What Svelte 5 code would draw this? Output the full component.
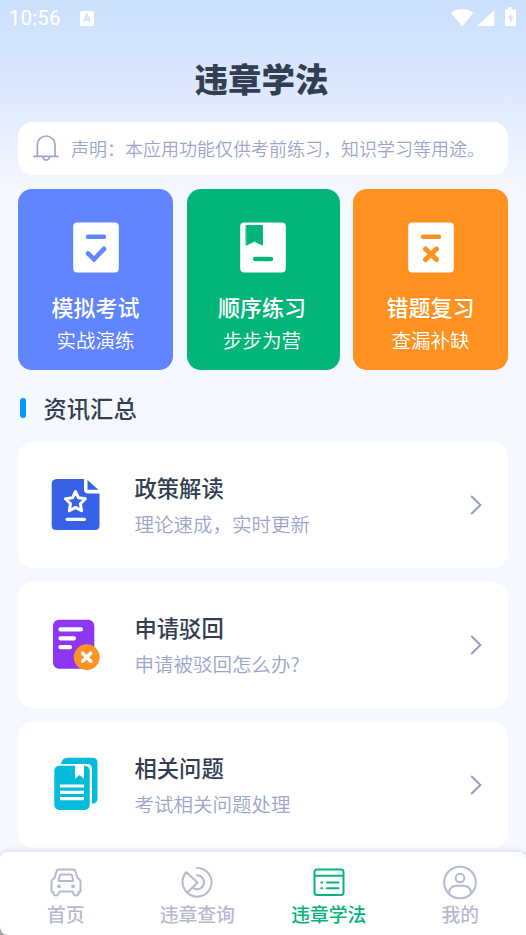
<script>
    const cards = [
        { id: 'exam', title: '模拟考试', text: '实战演练' },
        { id: 'order', title: '顺序练习', text: '步步为营' },
        { id: 'wrong', title: '错题复习', text: '查漏补缺' }
    ];

    const articles = [
        { id: 'policy', title: '政策解读', text: '理论速成，实时更新' },
        { id: 'reject', title: '申请驳回', text: '申请被驳回怎么办?' },
        { id: 'related', title: '相关问题', text: '考试相关问题处理' }
    ];

    const tabs = [
        { id: 'home', label: '首页' },
        { id: 'query', label: '违章查询' },
        { id: 'learn', label: '违章学法' },
        { id: 'mine', label: '我的' }
    ];

    let active = 'learn';
</script>

<div class="screen">
    <header class="status">
        <span class="time">10:56</span>
        <svg class="badge" width="14" height="15" viewBox="0 0 14 15">
            <rect width="14" height="15" rx="1.5" fill="#fff" />
            <path d="M4 10.5 7 3.5l3 7M5.2 8.4h3.6" fill="none" stroke="#cfe1fc" stroke-width="1.7" />
            <path d="M7.5 13.2h1M9.7 13.2h1M11.8 13.2h1" stroke="#cfe1fc" stroke-width="1" />
        </svg>
        <svg class="signals" width="66" height="20" viewBox="0 0 66 20">
            <g fill="#fff">
                <path d="M0 4.8C6.5-.2 15.8-.2 22.4 4.8L11.2 18.2z" />
                <path d="M43.3 2v16H26z" />
                <path d="M57-.7h4v1.900h2.700q1.300 0 1.300 1.300v14.200q0 1.300-1.300 1.300h-8.400q-1.300 0-1.300-1.300V2.500q0-1.300 1.300-1.300H57z" />
            </g>
            <path d="M60.300 4.500 57 10.500h2.300v4.500l3.200-6H60.300z" fill="#cfe1fc" />
        </svg>
    </header>

    <h1>违章学法</h1>

    <main>
        <section class="notice">
            <svg width="26" height="27" viewBox="0 0 26 27" fill="none" stroke="#9ca6cc" stroke-width="1.7" stroke-linecap="round">
                <path d="M4.400 21.300V9.800a8.800 8.800 0 0 1 17.600 0v11.500M1 21.400h24M10 22.500a3.300 3.300 0 0 0 6.400 0" />
            </svg>
            <p>声明：本应用功能仅供考前练习，知识学习等用途。</p>
        </section>

        <section class="cards">
            {#each cards as card}
                <button class="card {card.id}">
                    <svg width="46" height="51" viewBox="0 0 46 51" fill="none" stroke="currentColor" stroke-linecap="round" stroke-linejoin="round">
                        <rect x=".2" y=".4" width="45.600" height="50.200" rx="4" fill="#fff" stroke="none" />
                        {#if card.id === 'exam'}
                            <path d="M15 14.700h16" stroke-width="4.400" />
                            <path d="M15 31.500l6 5.800 10-10.500" stroke-width="4.600" stroke-linejoin="miter" />
                        {:else if card.id === 'order'}
                            <path d="M6.400 3.500h16v19.500l-8-3.700-8 3.700z" fill="currentColor" stroke-width="1" />
                            <path d="M15.300 37h15.600" stroke-width="4.600" />
                        {:else}
                            <path d="M15 14.700h16" stroke-width="4.400" />
                            <path d="M17.500 27l11 10.500M28.500 27l-11 10.500" stroke-width="5" />
                        {/if}
                    </svg>
                    <strong>{card.title}</strong>
                    <span>{card.text}</span>
                </button>
            {/each}
        </section>

        <h2>资讯汇总</h2>

        <section class="articles">
            {#each articles as article}
                <button class="article">
                    <svg class="cover" width="54" height="56" viewBox="0 0 54 56" stroke-linecap="round" stroke-linejoin="round">
                        {#if article.id === 'policy'}
                            <path d="M7.700 2H34v10.500q0 4 4 4h11.500v32q0 4.500-4.500 4.500H6.200q-4.500 0-4.500-4.500V6.500Q1.700 2 7.700 2z" fill="#3762e8" />
                            <path d="M37.500 3v9.700h10.800z" fill="#3762e8" />
                            <path d="M25.500 14.500l3 6.300 6.900 1-5 5 1.200 6.900-6.100-3.300-6.200 3.300 1.200-6.900-5-5 7-1z" fill="none" stroke="#fff" stroke-width="3" />
                            <path d="M17.200 42.300h17.200" stroke="#fff" stroke-width="3.300" />
                        {:else if article.id === 'reject'}
                            <rect x="3" y="2.700" width="41.300" height="49" rx="6" fill="#8d36f5" />
                            <path d="M10.500 12.400h20.500M10.500 21.300h13.500M10.500 30.200h9.500" stroke="#fff" stroke-width="4.200" />
                            <circle cx="36.700" cy="40.200" r="12.900" fill="#fe9222" />
                            <path d="M32.700 36.200l8 8M40.700 36.200l-8 8" stroke="#fff" stroke-width="3.600" />
                        {:else}
                            <path d="M11 7q1-6.300 6.500-6.300h25q5 0 5 5V42q0 4-5.500 5V12q0-5-5-5z" fill="#02bcd9" />
                            <rect x="4.300" y="8.700" width="35.400" height="44.300" rx="5" fill="#02bcd9" />
                            <path d="M25 7.500h9v14.200l-4.500-3.800-4.500 3.800z" fill="#fff" />
                            <path d="M10 29h24M10 35.300h24M10 41.700h24" stroke="#fff" stroke-width="3.200" stroke-linecap="butt" />
                        {/if}
                    </svg>
                    <span class="info">
                        <strong>{article.title}</strong>
                        <span>{article.text}</span>
                    </span>
                    <svg class="arrow" width="12" height="20" viewBox="0 0 12 20">
                        <path d="M1.800 1.500l8.600 8.500-8.600 8.500" fill="none" stroke="#959ebf" stroke-width="2" stroke-linecap="round" />
                    </svg>
                </button>
            {/each}
        </section>
    </main>

    <div class="dock">
        <nav>
            {#each tabs as tab}
                <button class:active={active === tab.id} on:click={() => (active = tab.id)}>
                    <svg width="36" height="36" viewBox="0 0 36 36" fill="none" stroke="currentColor" stroke-width="2" stroke-linecap="round" stroke-linejoin="round">
                        {#if tab.id === 'home'}
                            <path d="M11 5.500h14q2 0 2.500 2l2 6.500 2 1.500q1 1 1 2.500v9q0 1-1 1h-1v2q-.5 1.500-2.500 1.500t-2.500-1.500l-1-2.500h-13l-1 2.500q-.5 1.500-2.500 1.500t-2.500-1.500v-2h-1q-1 0-1-1v-9q0-1.500 1-2.500l2-1.500 2-6.500q.5-2 2.500-2z" />
                            <path d="M13.500 10.500h9q1.500 0 1.800 1.500l.9 5H10.800l.9-5q.3-1.500 1.800-1.500z" />
                            <path d="M11 22.300h.1M25 22.300h.1" stroke-width="3.800" />
                        {:else if tab.id === 'query'}
                            <path d="M18 4a14.300 14.300 0 1 1-9.800 24.500M18 11.300a7 7 0 1 1-4.500 12.300" />
                            <path d="M7.300 8.200L18.500 18.500 8.200 28.500A14.300 14.300 0 0 1 7.300 8.200z" />
                        {:else if tab.id === 'learn'}
                            <rect x="3.500" y="5.500" width="29" height="25.500" rx="2.500" />
                            <path d="M4 11.700h28M10.300 18.500h.8M16 18.500h11.500M10.300 24.300h.8M16 24.300h11.500" />
                        {:else}
                            <circle cx="18" cy="18.500" r="15.800" />
                            <circle cx="18" cy="14" r="4.300" />
                            <path d="M7 29.500q.5-7.800 7.500-7.800h7q7 0 7.500 7.800" />
                        {/if}
                    </svg>
                    <span>{tab.label}</span>
                </button>
            {/each}
        </nav>
    </div>
</div>

<style>
    :global(body) {
        margin: 0;
        overflow: hidden;
    }

    .screen {
        display: flex;
        flex-direction: column;
        height: 935px;
        overflow: hidden;
        font-family: 'Noto Sans CJK SC', sans-serif;
        background: linear-gradient(#cbe0fd 0, #dbe7fd 80px, #f5f8ff 195px);
    }

    button {
        border: none;
        padding: 0;
        background: none;
        font-family: inherit;
        cursor: pointer;
    }

    svg {
        display: block;
        flex: none;
        overflow: visible;
    }

    h1, h2, p {
        margin: 0;
    }

    .status {
        display: flex;
        align-items: center;
        flex: none;
        height: 36px;
        padding: 0 9px 0 9px;
        color: #fff;
    }

    .time {
        width: 71px;
        font: 400 20px/36px Roboto, sans-serif;
        letter-spacing: 0.4px;
        -webkit-text-stroke: 0.2px #fff;
    }

    .signals {
        margin: -1px 0 0 auto;
    }

    h1 {
        flex: none;
        height: 86px;
        padding-right: 3px;
        line-height: 84px;
        text-align: center;
        font-size: 33.5px;
        font-weight: 900;
        color: #333e52;
    }

    main {
        flex: 1;
        min-height: 0;
        padding: 0 18px;
    }

    .notice {
        display: flex;
        align-items: center;
        gap: 12px;
        height: 53px;
        padding-left: 15px;
        border-radius: 15px;
        background: #fff;
    }

    .notice p {
        padding-bottom: 2px;
        font-size: 18px;
        font-weight: 350;
        white-space: nowrap;
        color: #9ca6cc;
    }

    .cards {
        display: grid;
        grid-template-columns: 155px 153px 155px;
        column-gap: 13.5px;
        height: 181px;
        margin-top: 14px;
    }

    .card {
        display: flex;
        flex-direction: column;
        align-items: center;
        padding-top: 33px;
        border-radius: 14px;
    }

    .card strong {
        margin-top: 16px;
        font-size: 22px;
        font-weight: 500;
        line-height: 34px;
        color: #fff;
    }

    .card span {
        font-size: 19.5px;
        font-weight: 350;
        line-height: 33px;
        color: #fff;
    }

    .exam {
        background: #6184ff;
        color: #6184ff;
    }

    .order {
        background: #03b579;
        color: #03b579;
    }

    .order strong,
    .order span {
        margin-right: 2px;
    }

    .wrong {
        background: #ff9120;
        color: #ff9120;
    }

    h2 {
        display: flex;
        align-items: center;
        gap: 18px;
        height: 72px;
        padding: 4px 0 0 1.5px;
        box-sizing: border-box;
        font-size: 23.3px;
        font-weight: 500;
        color: #333e52;
    }

    h2::before {
        content: '';
        width: 6px;
        height: 20px;
        border-radius: 3px;
        background: #0397ff;
    }

    .articles {
        display: flex;
        flex-direction: column;
        gap: 14px;
    }

    .article {
        display: flex;
        align-items: center;
        flex: none;
        height: 126px;
        padding: 0 26px 0 32px;
        border-radius: 15px;
        background: #fff;
        text-align: left;
    }

    .info {
        display: flex;
        flex-direction: column;
        flex: 1;
        margin-left: 30.5px;
        padding-top: 1px;
    }

    .info strong {
        font-size: 22.3px;
        font-weight: 500;
        line-height: 36px;
        color: #333e52;
    }

    .info span {
        font-size: 19.5px;
        font-weight: 350;
        line-height: 37px;
        color: #9ca6cc;
    }

    .dock {
        position: relative;
        flex: none;
        background: linear-gradient(#f5f8ff 50%, #a5a5a5 50%);
        box-shadow: 0 0 6px rgba(90, 100, 125, 0.3);
        border-radius: 8px 8px 0 0;
    }

    nav {
        display: flex;
        height: 83px;
        border-radius: 8px 8px 0 8px;
        background: #fff;
    }

    nav button {
        display: flex;
        flex: 1;
        flex-direction: column;
        align-items: center;
        padding-top: 12px;
        color: #b4bad0;
    }

    nav span {
        font-size: 18.8px;
        font-weight: 500;
        line-height: 27px;
    }

    nav .active {
        color: #03b579;
    }
</style>
